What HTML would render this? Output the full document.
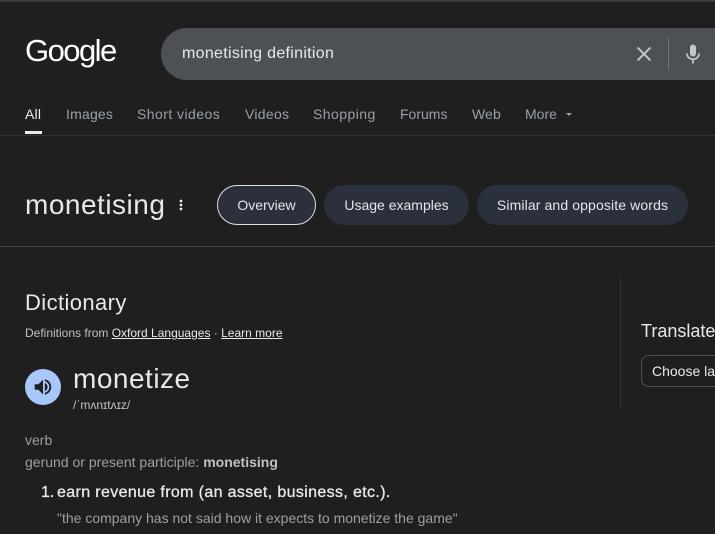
<!DOCTYPE html>
<html lang="en">
<head>
<meta charset="utf-8">
<title>monetising definition</title>
<style>
html,body{margin:0;padding:0;background:#1f1f1f;}
body{width:715px;height:534px;overflow:hidden;position:relative;font-family:"Liberation Sans",sans-serif;}
.a{position:absolute;white-space:nowrap;}
.line{position:absolute;left:0;width:715px;height:1px;}
.tab{position:absolute;top:105px;font-size:14px;line-height:18px;color:#9aa0a6;white-space:nowrap;}
.chip{position:absolute;top:185px;height:40px;border-radius:20px;background:#2b303d;color:#e3e5ea;font-size:14px;line-height:40px;text-align:center;white-space:nowrap;box-sizing:border-box;}
a{color:inherit;}
</style>
</head>
<body>
<div class="line" style="top:0;height:2px;background:#3c3c3c"></div>

<div class="a" style="left:25px;top:31px;font-size:31px;line-height:40px;color:#fff;letter-spacing:-1.55px;">Google</div>

<div class="a" style="left:161px;top:28px;width:554px;height:52px;border-radius:26px 0 0 26px;background:#4d5156"></div>
<div class="a" style="left:182px;top:44px;font-size:16px;line-height:20px;color:#e8eaed;letter-spacing:.3px;">monetising definition</div>
<svg class="a" style="left:632px;top:42px" width="24" height="24" viewBox="0 0 24 24"><path d="M5.600 5.600L18.400 18.400M18.400 5.600L5.600 18.400" stroke="#c4c7c9" stroke-width="2" fill="none"/></svg>
<div class="a" style="left:668px;top:38px;width:1px;height:32px;background:#70757a"></div>
<svg class="a" style="left:681px;top:42px" width="24" height="24" viewBox="0 0 24 24"><rect x="9" y="2.500" width="6" height="12" rx="3" fill="#c4c7c9"/><path d="M6 11.500c0 3.400 2.600 5.800 6 5.800s6-2.400 6-5.800" stroke="#c4c7c9" stroke-width="1.700" fill="none"/><rect x="11.100" y="17" width="1.800" height="4.500" fill="#c4c7c9"/></svg>

<div class="tab" style="left:25px;color:#e8eaed;letter-spacing:.2px;">All</div>
<div class="a" style="left:25px;top:131px;width:17px;height:3px;background:#e8eaed"></div>
<div class="tab" style="left:66px;letter-spacing:.2px;">Images</div>
<div class="tab" style="left:137px;letter-spacing:.45px;">Short videos</div>
<div class="tab" style="left:245px;letter-spacing:.3px;">Videos</div>
<div class="tab" style="left:313px;letter-spacing:.45px;">Shopping</div>
<div class="tab" style="left:400px;">Forums</div>
<div class="tab" style="left:472px;letter-spacing:.1px;">Web</div>
<div class="tab" style="left:525px;">More</div>
<svg class="a" style="left:565px;top:112px" width="8" height="5" viewBox="0 0 8 5"><path d="M1 1h6L4 4z" fill="#9aa0a6"/></svg>
<div class="line" style="top:135px;background:#303134"></div>

<div class="a" style="left:25px;top:187px;font-size:28px;line-height:36px;color:#e8e8e8;letter-spacing:.5px;">monetising</div>
<svg class="a" style="left:177px;top:198px" width="8" height="14" viewBox="0 0 8 14"><circle cx="4" cy="3" r="1.400" fill="#e8eaed"/><circle cx="4" cy="7" r="1.400" fill="#e8eaed"/><circle cx="4" cy="11" r="1.400" fill="#e8eaed"/></svg>

<div class="chip" style="left:217px;width:99px;border:1px solid #dfe1e5;line-height:38px;">Overview</div>
<div class="chip" style="left:324px;width:145px;">Usage examples</div>
<div class="chip" style="left:477px;width:211px;letter-spacing:.12px;">Similar and opposite words</div>
<div class="line" style="top:246px;background:#3c4043"></div>

<div class="a" style="left:25px;top:289px;font-size:22px;line-height:28px;color:#e8e8e8;letter-spacing:.4px;">Dictionary</div>
<div class="a" style="left:25px;top:325px;font-size:12px;line-height:16px;color:#bdc1c6;">Definitions from <a href="#" style="color:#e8eaed">Oxford Languages</a> · <a href="#" style="color:#e8eaed">Learn more</a></div>

<div class="a" style="left:25px;top:369px;width:36px;height:36px;border-radius:50%;background:#a8c7fa"></div>
<svg class="a" style="left:32px;top:376px" width="22" height="22" viewBox="0 0 24 24"><path d="M3 9v6h4l5 5V4L7 9z" fill="#1f1f1f"/><path d="M14 7.500c1.800 1 3 2.500 3 4.500s-1.200 3.500-3 4.500z" fill="#1f1f1f"/><path d="M14 4.500c3.500 1 6 4 6 7.500s-2.500 6.500-6 7.500" stroke="#1f1f1f" stroke-width="2" fill="none"/></svg>

<div class="a" style="left:73px;top:362px;font-size:28px;line-height:34px;color:#e8e8e8;letter-spacing:.5px;">monetize</div>
<div class="a" style="left:73px;top:397px;font-size:12px;line-height:16px;color:#bdc1c6;">/ˈmʌnɪtʌɪz/</div>

<div class="a" style="left:25px;top:432px;font-size:14px;line-height:16px;color:#9aa0a6;">verb</div>
<div class="a" style="left:25px;top:454px;font-size:14px;line-height:16px;color:#9aa0a6;">gerund or present participle: <b style="color:#bdc1c6">monetising</b></div>
<div class="a" style="left:41px;top:483px;font-size:16px;line-height:20px;color:#e8eaed;-webkit-text-stroke:.3px #e8eaed;">1.</div>
<div class="a" style="left:57px;top:483px;font-size:16px;line-height:20px;color:#e8eaed;letter-spacing:.36px;-webkit-text-stroke:.3px #e8eaed;">earn revenue from (an asset, business, etc.).</div>
<div class="a" style="left:57px;top:510px;font-size:14px;line-height:16px;color:#9aa0a6;">"the company has not said how it expects to monetize the game"</div>

<div class="a" style="left:620px;top:277px;width:1px;height:133px;background:#303134"></div>
<div class="a" style="left:641px;top:320px;width:74px;height:24px;overflow:hidden;font-size:18px;line-height:22px;color:#e8e8e8;">Translate</div>
<div class="a" style="left:641px;top:355px;width:74px;height:32px;border:1px solid #4d5156;border-right:0;border-radius:8px 0 0 8px;box-sizing:border-box;overflow:hidden;font-size:14px;line-height:30px;padding-left:10px;color:#e8eaed;">Choose language</div>
</body>
</html>
